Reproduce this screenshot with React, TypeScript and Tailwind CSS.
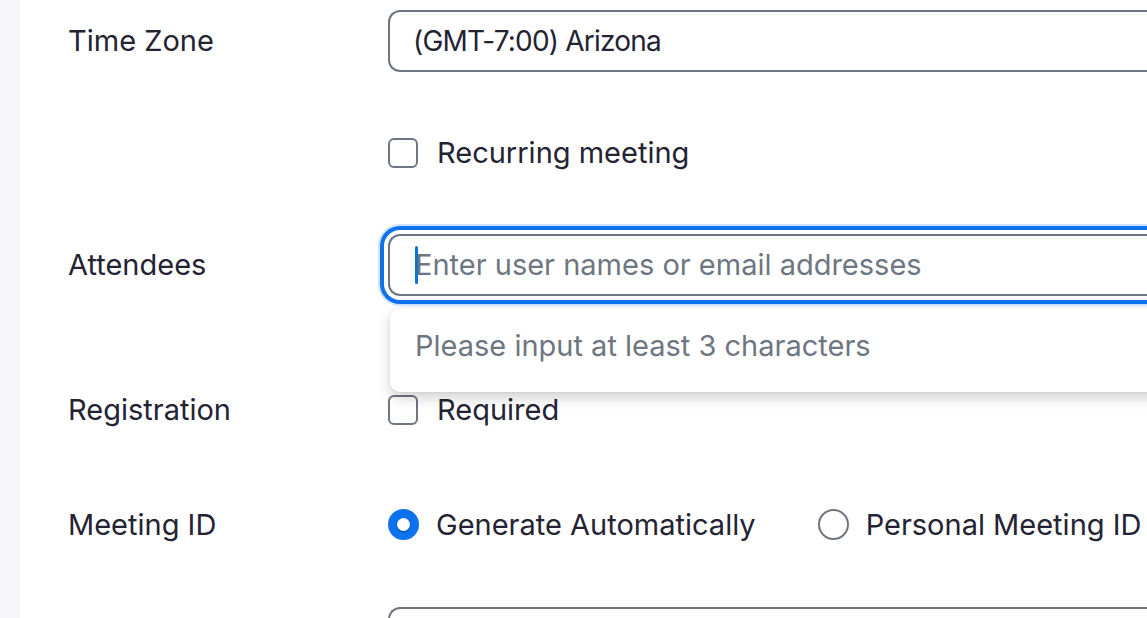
import { useState } from 'react';

const labelClass = 'w-[320px] shrink-0 text-[29px] text-[#232333]';

const Checkbox = ({ label }: { label: string }) => (
    <label className="flex items-center gap-[19px]">
        <span className="h-[30px] w-[30px] rounded-[6px] border-2 border-[#6e7681] bg-white" />
        <span className="text-[29px] text-[#232333]">{label}</span>
    </label>
);

const Radio = ({ label, checked }: { label: string; checked?: boolean }) => (
    <label className="flex items-center gap-[17px]">
        {checked ? (
            <span className="flex h-[31px] w-[31px] items-center justify-center rounded-full bg-[#0e72ed]">
                <span className="h-[13px] w-[13px] rounded-full bg-white shadow-[0_1px_2px_rgba(0,0,0,0.35)]" />
            </span>
        ) : (
            <span className="h-[31px] w-[31px] rounded-full border-2 border-[#6e7681] bg-white" />
        )}
        <span className="text-[29px] text-[#232333]">{label}</span>
    </label>
);

export default function App() {
    const [query] = useState('');

    return (
        <div className="flex h-[618px] w-[1147px] overflow-hidden bg-white font-['Inter',sans-serif]">
            <div className="w-5 shrink-0 bg-[#f7f7f9]" />
            <div className="relative flex flex-1 flex-col pl-12">
                <div className="mt-[10px] flex h-[62px] items-center">
                    <span className={labelClass}>Time Zone</span>
                    <div className="flex h-[62px] flex-1 items-center rounded-l-[12px] border-2 border-r-0 border-[#6e7681] pl-[23px] text-[28px] tracking-[-0.8px] text-[#232333]">
                        (GMT-7:00) Arizona
                    </div>
                </div>

                <div className="mt-[66px] flex h-[30px] items-center">
                    <span className={labelClass} />
                    <Checkbox label="Recurring meeting" />
                </div>

                <div className="mt-[66px] flex h-[62px] items-center">
                    <span className={labelClass}>Attendees</span>
                    <div className="relative flex-1">
                        <div className="flex h-[62px] items-center rounded-l-[12px] border-2 border-r-0 border-[#6e7681] bg-white pl-[25px] shadow-[0_0_0_4px_white,0_0_0_8px_#0e72ed,0_0_0_10px_#cfe3fb]">
                            <span className="h-[38px] w-[3px] rounded-full bg-[#0e72ed]" />
                            <span className="-ml-[3px] text-[29px] text-[#6e7681]">
                                {query || 'Enter user names or email addresses'}
                            </span>
                        </div>
                        <div className="absolute top-[74px] -right-4 left-[2px] z-10 flex h-[84px] items-center rounded-l-[10px] bg-white pb-[8px] pl-[25px] text-[29px] text-[#6e7681] shadow-[0_6px_14px_rgba(0,0,0,0.18),0_0_3px_rgba(0,0,0,0.08)]">
                            Please input at least 3 characters
                        </div>
                    </div>
                </div>

                <div className="mt-[99px] flex h-[30px] items-center">
                    <span className={labelClass}>Registration</span>
                    <Checkbox label="Required" />
                </div>

                <div className="mt-[84px] flex h-[31px] items-center">
                    <span className={labelClass}>Meeting ID</span>
                    <div className="flex items-center gap-[62px]">
                        <Radio label="Generate Automatically" checked />
                        <Radio label="Personal Meeting ID" />
                    </div>
                </div>

                <div className="mt-[67px] flex">
                    <span className={labelClass} />
                    <div className="h-[62px] flex-1 rounded-l-[12px] border-2 border-r-0 border-[#6e7681]" />
                </div>
            </div>
        </div>
    );
}
